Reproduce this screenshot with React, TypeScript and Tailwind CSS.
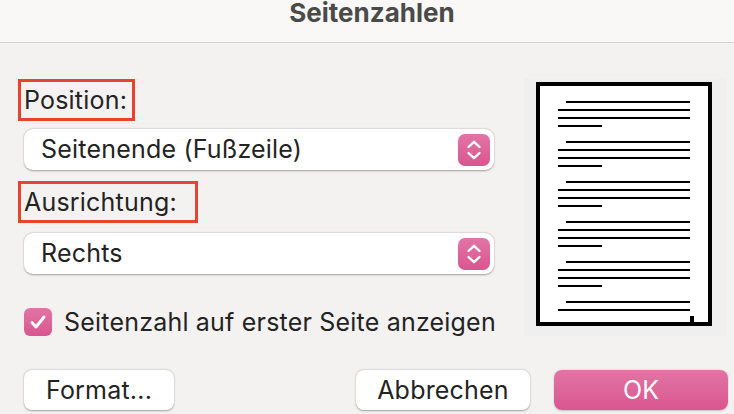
import React from "react";

const font = { fontFamily: "Inter, 'Noto Sans', sans-serif" };

function Stepper() {
  return (
    <div className="w-[32px] h-[32px] rounded-[7px] bg-gradient-to-b from-[#e274a6] to-[#d9558f] flex items-center justify-center">
      <svg width="16" height="22" viewBox="0 0 16 22" fill="none" stroke="white" strokeWidth="2.4" strokeLinecap="round" strokeLinejoin="round">
        <path d="M2.5 8 L8 2.8 L13.5 8" />
        <path d="M2.5 14 L8 19.2 L13.5 14" />
      </svg>
    </div>
  );
}

function Select({ value }: { value: string }) {
  return (
    <div className="ml-[6px] w-[470px] h-[41px] shrink-0 rounded-[9px] bg-white shadow-[0_0.5px_2px_rgba(0,0,0,0.35)] flex items-center justify-between pl-[17px] pr-[4px]">
      <span className="text-[25px] leading-none tracking-[0.2px] text-[#232323]">{value}</span>
      <Stepper />
    </div>
  );
}

function PagePreview() {
  const groups = [102, 142, 182, 222, 262];
  return (
    <svg width="202" height="258" viewBox="524 78 202 258">
      <rect x="524" y="78" width="202" height="258" fill="#efefef" />
      <rect x="538" y="84" width="172" height="240" fill="white" stroke="black" strokeWidth="4" />
      {groups.map((y) => (
        <g key={y} fill="black">
          <rect x="566" y={y - 1} width="124" height="2" />
          <rect x="558" y={y + 7} width="132" height="2" />
          <rect x="558" y={y + 15} width="132" height="2" />
          <rect x="558" y={y + 23} width="44" height="2" />
        </g>
      ))}
      <rect x="566" y="301" width="124" height="2" fill="black" />
      <rect x="558" y="309" width="132" height="2" fill="black" />
      <rect x="690" y="316" width="4" height="8" fill="black" />
    </svg>
  );
}

export default function App() {
  return (
    <div style={font} className="w-[734px] h-[414px] bg-[#f3f2f1] flex flex-col overflow-hidden text-[#232323]">
      <div className="h-[43px] shrink-0 bg-[#f9f8f7] border-b border-[#d6d5d4] flex justify-center">
        <span className="text-[26px] leading-none font-bold text-[#4a4a4a] pl-[10px]">Seitenzahlen</span>
      </div>

      <div className="flex shrink-0 pl-[18px] pt-[36px]">
        <div className="w-[506px] flex flex-col">
          <div className="w-[117px] h-[42px] shrink-0 border-[3px] border-[#e8432d] flex items-center pl-[3px]">
            <span className="text-[25px] leading-none tracking-[0.2px]">Position:</span>
          </div>
          <div className="mt-[8px]">
            <Select value="Seitenende (Fußzeile)" />
          </div>
          <div className="mt-[11px] w-[180px] h-[42px] shrink-0 border-[3px] border-[#e8432d] flex items-center pl-[3px]">
            <span className="text-[25px] leading-none tracking-[0.2px]">Ausrichtung:</span>
          </div>
          <div className="mt-[10px]">
            <Select value="Rechts" />
          </div>
          <div className="mt-[34px] ml-[6px] h-[28px] flex items-center gap-[12px]">
            <div className="w-[28px] h-[28px] rounded-[6px] bg-gradient-to-b from-[#e274a6] to-[#d9558f] flex items-center justify-center">
              <svg width="18" height="16" viewBox="0 0 18 16" fill="none" stroke="white" strokeWidth="3" strokeLinecap="round" strokeLinejoin="round">
                <path d="M3 8.5 L7 13 L15 3" />
              </svg>
            </div>
            <span className="text-[25px] leading-none tracking-[0.2px]">Seitenzahl auf erster Seite anzeigen</span>
          </div>
        </div>
        <div className="-mt-[1px] h-[258px]">
          <PagePreview />
        </div>
      </div>

      <div className="flex shrink-0 items-center pl-[24px] pr-[6px] mt-[34px]">
        <button className="w-[150px] h-[40px] rounded-[8px] bg-white shadow-[0_0.5px_2px_rgba(0,0,0,0.35)] text-[25px] leading-none tracking-[0.2px] text-[#232323]">
          Format...
        </button>
        <button className="ml-auto w-[174px] h-[40px] rounded-[8px] bg-white shadow-[0_0.5px_2px_rgba(0,0,0,0.35)] text-[25px] leading-none tracking-[0.2px] text-[#232323]">
          Abbrechen
        </button>
        <button className="ml-[24px] w-[174px] h-[40px] rounded-[8px] bg-gradient-to-b from-[#e274a6] to-[#d9558f] shadow-[0_0.5px_2px_rgba(0,0,0,0.2)] text-[25px] leading-none text-white">
          OK
        </button>
      </div>
    </div>
  );
}
